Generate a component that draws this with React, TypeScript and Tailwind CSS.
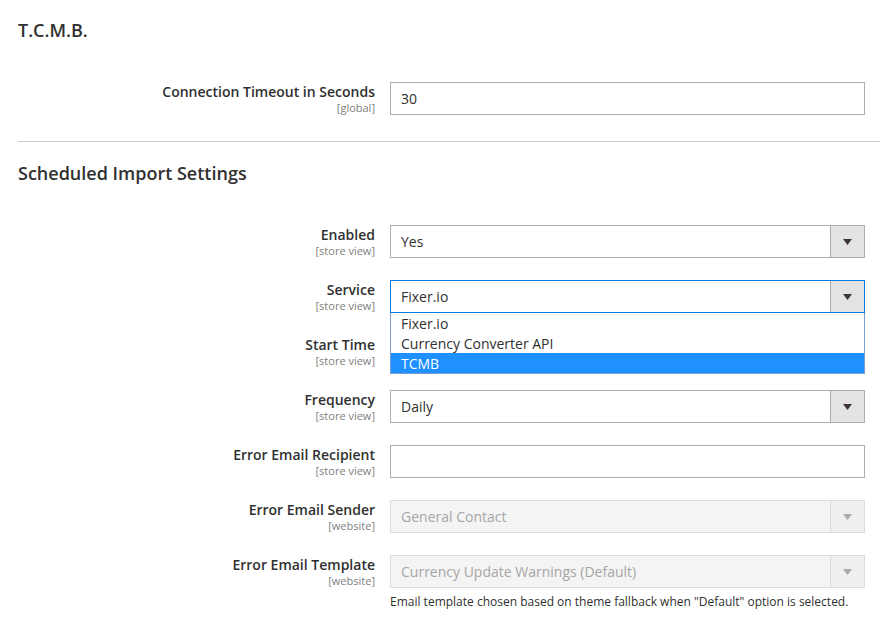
import React from "react"

type Row = {
  label: string
  scope: string
  kind: "text" | "select" | "disabled"
  value: string
  focused?: boolean
  options?: string[]
  note?: string
}

const rows: Row[] = [
  { label: "Enabled", scope: "[store view]", kind: "select", value: "Yes" },
  {
    label: "Service",
    scope: "[store view]",
    kind: "select",
    value: "Fixer.io",
    focused: true,
    options: ["Fixer.io", "Currency Converter API", "TCMB"],
  },
  { label: "Start Time", scope: "[store view]", kind: "select", value: "" },
  { label: "Frequency", scope: "[store view]", kind: "select", value: "Daily" },
  { label: "Error Email Recipient", scope: "[store view]", kind: "text", value: "" },
  { label: "Error Email Sender", scope: "[website]", kind: "disabled", value: "General Contact" },
  {
    label: "Error Email Template",
    scope: "[website]",
    kind: "disabled",
    value: "Currency Update Warnings (Default)",
    note: 'Email template chosen based on theme fallback when "Default" option is selected.',
  },
]

function Arrow({ disabled }: { disabled?: boolean }) {
  return (
    <div
      className={`flex w-[34px] shrink-0 items-center justify-center border-l ${
        disabled ? "border-[#dcdcdc] bg-[#efefef]" : "border-[#adadad] bg-[#e3e3e3]"
      }`}
    >
      <svg width="9" height="6" viewBox="0 0 9 6">
        <path d="M0 0 H9 L4.5 6 Z" fill={disabled ? "#a9a9a9" : "#41362f"} />
      </svg>
    </div>
  )
}

function Field({ row }: { row: Row }) {
  if (row.kind === "text") {
    return (
      <div className="flex h-[33px] items-center border border-[#adadad] bg-white px-[10px] text-[14px] text-[#303030]">
        {row.value}
      </div>
    )
  }
  if (row.kind === "disabled") {
    return (
      <div className="flex h-[33px] border border-[#dcdcdc] bg-[#f4f4f4] text-[14px] text-[#a6a6a6]">
        <div className="flex flex-1 items-center px-[10px]">{row.value}</div>
        <Arrow disabled />
      </div>
    )
  }
  return (
    <div className="relative">
      <div
        className={`flex h-[33px] border bg-white text-[14px] text-[#303030] ${
          row.focused ? "border-[#007bdb]" : "border-[#adadad]"
        }`}
      >
        <div className="flex flex-1 items-center px-[10px]">{row.value}</div>
        <Arrow />
      </div>
      {row.options && (
        <div className="absolute left-0 right-0 top-full z-10 border border-t-0 border-[#7a9cd3] bg-white text-[14px] text-[#303030]">
          {row.options.map((o, i) => (
            <div
              key={o}
              className={`flex h-[20px] items-center px-[10px] ${
                i === row.options!.length - 1 ? "bg-[#1e90ff] text-white" : ""
              }`}
            >
              {o}
            </div>
          ))}
        </div>
      )}
    </div>
  )
}

function FormRow({ row }: { row: Row }) {
  return (
    <div className="flex gap-[15px]">
      <div className="w-[357px] shrink-0 text-right">
        <div className="text-[14px] font-semibold leading-[19px] text-[#303030]">{row.label}</div>
        <div className="text-[11px] leading-[14px] text-[#808080]">{row.scope}</div>
      </div>
      <div className="w-[475px] shrink-0">
        <Field row={row} />
        {row.note && (
          <div className="mt-[6px] text-[12px] leading-[16px] text-[#303030]">{row.note}</div>
        )}
      </div>
    </div>
  )
}

export default function App() {
  return (
    <div
      className="min-h-[632px] bg-white pl-[18px] pr-px pt-[18px]"
      style={{ fontFamily: '"Open Sans", "Liberation Sans", sans-serif' }}
    >
      <h2 className="text-[18px] font-semibold leading-[24px] text-[#303030]">T.C.M.B.</h2>
      <div className="mt-[40px]">
        <FormRow
          row={{ label: "Connection Timeout in Seconds", scope: "[global]", kind: "text", value: "30" }}
        />
      </div>
      <div className="mt-[26px] border-t border-[#cccccc]" />
      <h2 className="mt-[19px] text-[18px] font-semibold leading-[24px] text-[#303030]">
        Scheduled Import Settings
      </h2>
      <div className="mt-[40px] flex flex-col gap-[22px]">
        {rows.map(r => (
          <FormRow key={r.label} row={r} />
        ))}
      </div>
    </div>
  )
}
